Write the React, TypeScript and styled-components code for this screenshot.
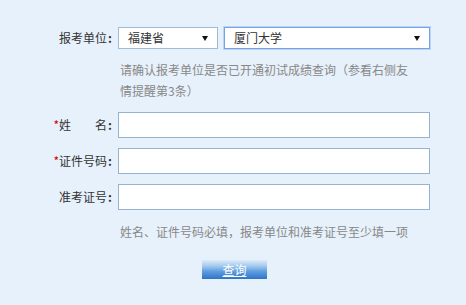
import { createGlobalStyle } from "styled-components"
import styled from "styled-components"

const GlobalStyle = createGlobalStyle`
  html, body {
    margin: 0;
    padding: 0;
    background: #e7f1fb;
  }
  body {
    font-family: "Noto Sans CJK SC", "Liberation Sans", sans-serif;
    font-size: 12px;
    color: #333;
  }
`

const Page = styled.div`
  width: 466px;
  height: 305px;
  box-sizing: border-box;
  padding-top: 27px;
  display: flex;
  flex-flow: column;
`

const Row = styled.div<{ $gap?: number }>`
  display: flex;
  align-items: center;
  gap: 6px;
  margin-top: ${p => p.$gap ?? 0}px;
`

const Label = styled.label`
  width: 112px;
  text-align: right;
  line-height: 20px;
  color: #333;
  white-space: pre;
`

const Star = styled.span`
  color: #cc0000;
`

const Colon = styled.span`
  font-weight: bold;
  margin-left: 1px;
`

const SelectBox = styled.div<{ $width: number; $focused?: boolean }>`
  width: ${p => p.$width}px;
  height: 22px;
  box-sizing: border-box;
  display: flex;
  align-items: center;
  justify-content: space-between;
  padding: 0 9px 0 9px;
  background: #fff;
  border: 1px solid ${p => (p.$focused ? "#74a3e8" : "#9dbcd9")};
  box-shadow: ${p => (p.$focused ? "0 0 0 1px #bcd5f5" : "none")};
  color: #333;
  line-height: 20px;
`

const Arrow = styled.span`
  width: 0;
  height: 0;
  border-left: 3px solid transparent;
  border-right: 3px solid transparent;
  border-top: 5px solid #111;
`

const Input = styled.input`
  width: 312px;
  height: 26px;
  box-sizing: border-box;
  border: 1px solid #93b3d1;
  background: #fff;
  padding: 0 4px;
  font: inherit;
  outline: none;
`

const Hint = styled.div<{ $gap: number }>`
  margin-left: 120px;
  margin-top: ${p => p.$gap}px;
  width: 296px;
  color: #888;
  line-height: 21px;
`

const ButtonRow = styled.div`
  margin-top: 18px;
  padding-left: 202px;
`

const SearchButton = styled.button`
  width: 65px;
  height: 19px;
  border: none;
  padding: 0;
  cursor: pointer;
  background: linear-gradient(to bottom, #dcebfa 0%, #a9cbef 30%, #5d9ee0 60%, #2f74c6 100%);
  color: #fff;
  font: inherit;
  font-size: 12px;
  line-height: 19px;
  text-decoration: underline;
`

export default function App() {
  return (
    <Page>
      <GlobalStyle />
      <Row>
        <Label>报考单位<Colon>:</Colon></Label>
        <SelectBox $width={100}>
          <span>福建省</span>
          <Arrow />
        </SelectBox>
        <SelectBox $width={206} $focused>
          <span>厦门大学</span>
          <Arrow />
        </SelectBox>
      </Row>
      <Hint $gap={10}>请确认报考单位是否已开通初试成绩查询（参看右侧友情提醒第3条）</Hint>
      <Row $gap={11}>
        <Label><Star>*</Star>姓{"\u3000\u3000"}名<Colon>:</Colon></Label>
        <Input type="text" />
      </Row>
      <Row $gap={10}>
        <Label><Star>*</Star>证件号码<Colon>:</Colon></Label>
        <Input type="text" />
      </Row>
      <Row $gap={10}>
        <Label>准考证号<Colon>:</Colon></Label>
        <Input type="text" />
      </Row>
      <Hint $gap={11}>姓名、证件号码必填，报考单位和准考证号至少填一项</Hint>
      <ButtonRow>
        <SearchButton>查询</SearchButton>
      </ButtonRow>
    </Page>
  )
}
